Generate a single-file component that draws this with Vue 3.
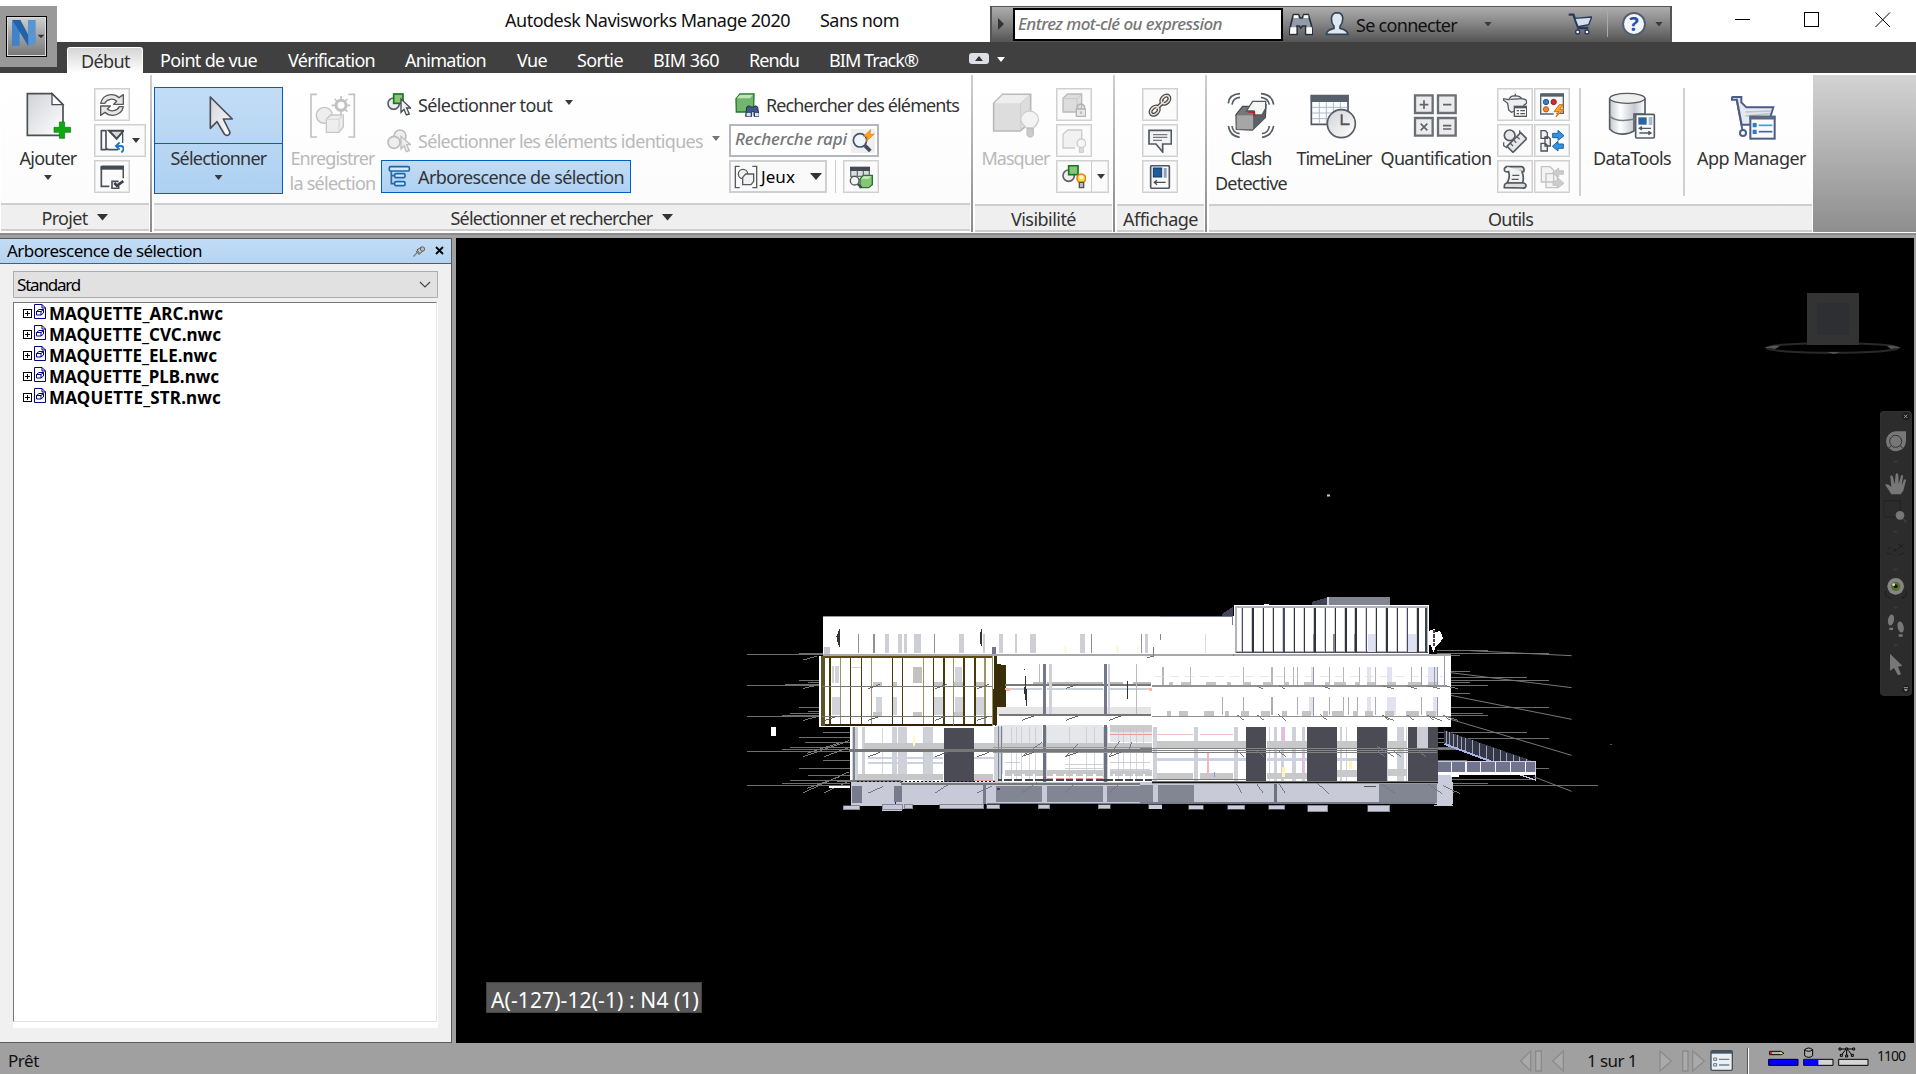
<script setup>
import { h } from 'vue'

// Tightens or loosens the tracking so that a label fills its slot width.
const vFit = {
  mounted(el, { value }) {
    const range = document.createRange()
    range.selectNodeContents(el)
    const natural = range.getBoundingClientRect().width
    const count = el.textContent.length
    el.style.letterSpacing = `${(value - natural) / count}px`
  },
}

const S = 'fill="none" stroke-linejoin="round"'
const glyphs = {
  add: `<path d="M10 5H84L117 38V130H10Z" fill="url(#paper)" stroke="#4a4e55" stroke-width="5"/><path d="M84 5V38H117Z" fill="#fff" stroke="#4a4e55" stroke-width="4"/><path d="M106 90h16v16h18v15h-18v18h-16v-18H90v-15h16z" fill="#0fa80f" stroke="#0a7a0a" stroke-width="2"/>`,
  arrow: `<path d="M46 18V112L66 92L88 129Q94 136 102 131Q107 126 103 120L85 84H112Z" fill="url(#paper)" stroke="#4a4e58" stroke-width="5" stroke-linejoin="round"/>`,
  save: `<g fill="none" stroke="#c2c2c2" stroke-width="5"><path d="M24 7H6V135H24M118 7H136V135H118"/><circle cx="96" cy="40" r="15" stroke-width="9"/><path d="M96 12V25M96 55V68M68 40H81M111 40H124M77 21L86 30M115 21L106 30M115 59L106 50"/></g><circle cx="46" cy="70" r="24" fill="#eee" stroke="#c2c2c2" stroke-width="4"/><path d="M52 82L65 69H103V104L90 121H52Z" fill="#eee" stroke="#c6c6c6" stroke-width="4"/><path d="M52 82H90V121M90 82L103 69" fill="none" stroke="#dadada" stroke-width="4"/>`,
  refresh: `<g fill="#e6e6e6" stroke="#5a5a5a" stroke-width="4" stroke-linejoin="round"><path d="M2 31Q7 7 33 5Q47 4 57 14L70 5V34H41L50 25Q42 17 31 19Q19 21 14 31Z"/><path d="M70 41Q65 65 39 67Q25 68 15 58L2 67V39H31L22 48Q30 55 41 53Q53 51 58 41Z"/></g>`,
  reset: `<path d="M4 5H18V62H4ZM18 58Q22 62 28 62H54" ${S} stroke="#4d5159" stroke-width="5"/><path d="M27 5H71L50 29Z" fill="#d8d8d8" stroke="#454950" stroke-width="6"/><path d="M68 13V42" stroke="#4d5159" stroke-width="4"/><path d="M49 51H62Q71 51 71 60Q70 66 64 70M59 40L48 51L59 62" fill="none" stroke="#1d78cc" stroke-width="6"/>`,
  options: `<path d="M4 4H70V40M4 4V64H28" fill="none" stroke="#4d5159" stroke-width="5"/><rect x="2" y="3" width="70" height="11" fill="#454950"/><path d="M56 49H36V70H56V63" fill="none" stroke="#4d5159" stroke-width="5"/><path d="M43 54L51 62L70 48" fill="none" stroke="#3d4148" stroke-width="8"/>`,
  selAll: `<circle cx="20" cy="32" r="17" fill="#eee" stroke="#596068" stroke-width="5"/><rect x="20" y="3" width="28" height="28" fill="#8bc47a" stroke="#17771b" stroke-width="5"/><path d="M42 18V58L51 49L58 66L67 63L59 45H71Z" fill="#f4f4f4" stroke="#444b55" stroke-width="4"/>`,
  selSame: `<g fill="#eee" stroke="#bebebe" stroke-width="5"><circle cx="39" cy="21" r="18"/><circle cx="21" cy="40" r="18"/><path d="M42 22V60L51 51L58 68L67 65L59 47H71Z" stroke-width="4"/></g>`,
  tree: `<path d="M13 18V56H22M13 32H22" fill="none" stroke="#33679c" stroke-width="5"/><g fill="#d5e9fa" stroke="#1b69ad" stroke-width="5"><rect x="7" y="5" width="60" height="13" rx="4"/><rect x="23" y="26" width="31" height="12" rx="4"/><rect x="23" y="50" width="31" height="12" rx="4"/></g>`,
  findItems: `<path d="M3 17L15 3H57L56 42L45 57H4Z" fill="#71b66c" stroke="#24782a" stroke-width="4"/><path d="M5 16L15 5H54L45 16Z" fill="#c0e6b6"/><path d="M35 42Q41 35 48 42H55Q63 35 68 42L72 70H57V56H50V70H32Z" fill="#3c5a83" stroke="#203456" stroke-width="3"/><path d="M35 60h12v10h-12zM60 60h11v10h-11z" fill="#dce4ef"/>`,
  quick: `<rect width="72" height="72" fill="#efefef"/><circle cx="27" cy="34" r="20" fill="#eef6fa" stroke="#46536a" stroke-width="5"/><path d="M42 50L58 66" stroke="#444b55" stroke-width="11"/><path d="M59 2L38 22L50 23L45 38L70 15L57 16Z" fill="#ffa21f" stroke="#ef7b06" stroke-width="2"/>`,
  sets: `<path d="M17 4H4V68H17M55 4H68V68H55" fill="none" stroke="#555b63" stroke-width="4"/><circle cx="27" cy="27" r="14" fill="#f2f2f2" stroke="#555b63" stroke-width="4"/><path d="M26 37L35 27H59V49L51 59H26Z" fill="#f2f2f2" stroke="#555b63" stroke-width="4"/>`,
  compare: `<rect x="3" y="5" width="60" height="13" fill="#454b54"/><path d="M5 18V34H61V18M25 18V33M43 18V33" fill="#ddd" stroke="#6d737b" stroke-width="4"/><path d="M33 42L43 31H70V59L59 68H33Z" fill="#85c678" stroke="#24782a" stroke-width="4"/><path d="M36 41L44 34H67L59 42Z" fill="#c6e8bd"/><circle cx="17" cy="47" r="13" fill="#edf5f5" stroke="#555" stroke-width="4"/><path d="M26 57L38 68" stroke="#444b55" stroke-width="7"/>`,
  hide: `<path d="M5 34L32 7H116V90L85 117H5Z" fill="#ddd" stroke="#b9b9b9" stroke-width="5"/><path d="M7 34L32 9H114L86 34Z" fill="#eee"/><path d="M86 34V116M86 34L115 8" stroke="#ccc" stroke-width="3"/><path d="M86 84A24 24 0 1 1 140 84Q136 98 124 108H104Q90 97 86 84Z" fill="#f3f3f3" stroke="#cecece" stroke-width="4"/><path d="M105 109H124V129L119 135H110L105 129Z" fill="#ccc" stroke="#bababa" stroke-width="3"/>`,
  lockCube: `<path d="M3 16L17 3H59V44L45 57H3Z" fill="#ddd" stroke="#b9b9b9" stroke-width="4"/><path d="M3 17H45V56M45 17L59 4" fill="none" stroke="#c9c9c9" stroke-width="3"/><path d="M46 47V38Q57 28 67 39V48" fill="none" stroke="#b3b3b3" stroke-width="5"/><path d="M43 48H71V70H43Z" fill="#e6e6e6" stroke="#b3b3b3" stroke-width="4"/><path d="M57 55V63" stroke="#999" stroke-width="3"/>`,
  showCube: `<path d="M39 57H3V16L17 3H59V31" fill="#f1f1f1" stroke="#ccc" stroke-width="4"/><circle cx="58" cy="43" r="13" fill="#f7f7f7" stroke="#ccc" stroke-width="4"/><path d="M52 56H64V70H52Z" fill="#ddd" stroke="#c8c8c8" stroke-width="3"/>`,
  showAll: `<circle cx="20" cy="32" r="17" fill="#eee" stroke="#5b626c" stroke-width="5"/><rect x="20" y="2" width="28" height="27" fill="#86c67d" stroke="#17771b" stroke-width="5"/><circle cx="58" cy="40" r="13" fill="#ffda43" stroke="#ee7f09" stroke-width="5"/><circle cx="58" cy="37" r="6" fill="#fff9ce"/><path d="M52 52H65V68H52Z" fill="#bbb" stroke="#555" stroke-width="4"/>`,
  link: `<g fill="none" stroke="#45444a" stroke-width="12"><ellipse cx="20" cy="53" rx="10" ry="14" transform="rotate(45 20 53)"/><ellipse cx="52" cy="20" rx="10" ry="14" transform="rotate(45 52 20)"/><path d="M24 48L49 24"/></g><g fill="none" stroke="#e9dfcf" stroke-width="5"><ellipse cx="20" cy="53" rx="10" ry="14" transform="rotate(45 20 53)"/><ellipse cx="52" cy="20" rx="10" ry="14" transform="rotate(45 52 20)"/><path d="M24 48L49 24"/></g>`,
  comment: `<path d="M3 4H70V45H44V69L24 45H3Z" fill="#f3f3f3" stroke="#515761" stroke-width="5"/><path d="M15 17H58M15 25H58M15 34H42" stroke="#747a84" stroke-width="4"/>`,
  props: `<rect x="8" y="2" width="56" height="68" rx="4" fill="#fafafa" stroke="#505761" stroke-width="5"/><rect x="16" y="9" width="25" height="27" fill="#205a99" stroke="#123968" stroke-width="3"/><path d="M47 9H56V38H47Z" fill="#8aa2bc"/><path d="M19 52H53M27 46L19 52L27 59" fill="none" stroke="#454d58" stroke-width="4"/>`,
  clash: `<g fill="none" stroke="#555d67" stroke-width="5"><path d="M4 34Q6 7 39 5M15 38Q18 17 39 16"/><path d="M102 5Q135 7 140 38M102 16Q124 19 127 38"/><path d="M4 102Q9 132 38 136M15 102Q17 122 38 125"/><path d="M140 102Q134 132 105 136M127 102Q125 122 105 125"/></g><path d="M27 68L47 43H69L117 38L115 76L76 114L28 112Z" fill="#777" stroke="#464c54" stroke-width="4"/><path d="M29 70H78V112H29Z" fill="#a6a6a6"/><path d="M79 71L114 49V78L79 112Z" fill="#5c6066"/><path d="M58 57L77 28H116V49L105 69H81V57Z" fill="#f5f5f5" stroke="#535963" stroke-width="4"/><path d="M62 60H82V74" fill="none" stroke="#c6171c" stroke-width="5"/>`,
  timeline: `<path d="M4 11H114V97H4Z" fill="#fafcff" stroke="#505862" stroke-width="5"/><rect x="2" y="9" width="114" height="21" fill="#57606b"/><path d="M6 46H112M6 63H112M6 80H112M28 31V95M49 31V95M70 31V95M91 31V95" stroke="#adb8c5" stroke-width="3"/><circle cx="94" cy="95" r="42" fill="url(#paper)" stroke="#555d67" stroke-width="5"/><path d="M95 67V97H119" fill="none" stroke="#555" stroke-width="6"/>`,
  quant: `<g fill="#ececec" stroke="#6b6f76" stroke-width="7"><path d="M9 10H62V63H9ZM78 10H131V63H78ZM9 78H62V131H9ZM78 78H131V131H78Z"/></g><path d="M23 38H49M36 25V51M93 38H118M26 95L46 115M46 95L26 115M93 101H118M93 111H118" stroke="#5e636b" stroke-width="5"/>`,
  teapot: `<path d="M20 16Q24 7 37 9Q49 7 57 17L68 20Q76 30 63 36L62 45L25 58L17 51L14 31L1 21L2 17L18 20Z" fill="#eee" stroke="#525963" stroke-width="4"/><path d="M22 19L57 17M37 2V9" stroke="#525963" stroke-width="4"/><rect x="34" y="40" width="37" height="30" fill="#fafafa" stroke="#505862" stroke-width="4"/><path d="M34 43H71" stroke="#505862" stroke-width="6"/><path d="M41 53H48M52 53H66M41 62H48M52 62H66" stroke="#555" stroke-width="4"/>`,
  script: `<path d="M2 3H70V61H49M2 3V63H41" fill="#f6f6f6" stroke="#59616b" stroke-width="4"/><rect y="2" width="72" height="9" fill="#57616d"/><circle cx="18" cy="27" r="8" fill="#337fca" stroke="#215c9c" stroke-width="3"/><circle cx="41" cy="27" r="8" fill="#c5302c" stroke="#932827" stroke-width="3"/><circle cx="18" cy="49" r="8" fill="#f0862d" stroke="#bd5e15" stroke-width="3"/><path d="M58 35L42 56H57L48 71L72 50H59L69 35Z" fill="#ffa625" stroke="#d57014" stroke-width="3"/>`,
  sensor: `<circle cx="20" cy="19" r="16" fill="#e8e8e8" stroke="#555c65" stroke-width="5"/><path d="M53 11L71 29L30 70L12 52Z" fill="#e9e9e9" stroke="#555c65" stroke-width="5"/><path d="M2 40V50L12 57M50 4V12M22 43L30 51M32 33L40 41M42 23L50 31" fill="none" stroke="#59616b" stroke-width="4"/>`,
  copyDb: `<g fill="#f2f2f2" stroke="#4c535d" stroke-width="4"><path d="M3 5H16L22 11V28H3ZM15 24H25L31 30V51H15ZM3 43H16L22 49V66H3Z"/></g><path d="M38 13H54V4L72 20L54 34V26H38ZM70 45H54V37L37 52L54 66V58H70Z" fill="#3692e1" stroke="#1763a6" stroke-width="3"/>`,
  scroll: `<path d="M12 5H56Q66 8 62 20H20Z" fill="#ddd" stroke="#505862" stroke-width="5"/><path d="M12 5Q1 8 5 18Q9 22 17 20Q22 38 12 54H59Q64 34 56 19" fill="#f2f2f2" stroke="#505862" stroke-width="5"/><path d="M4 68Q3 54 13 54H62Q72 58 68 66Q65 71 57 69Z" fill="#ddd" stroke="#505862" stroke-width="5"/><path d="M28 31H49M26 43H47" stroke="#505862" stroke-width="4"/>`,
  transfer: `<g fill="#f3f3f3" stroke="#c4c4c4" stroke-width="4"><path d="M4 5H30L41 16V51H4ZM18 26H43L52 35V68H18Z"/><path d="M70 17H56V9L38 23L56 36V28H70ZM39 48H55V40L72 55L55 68V61H39Z" fill="#ccc" stroke-width="3"/></g>`,
  data: `<path d="M5 18V111Q27 134 65 123L78 117V66H111V18" fill="url(#metal)" stroke="#555c65" stroke-width="5"/><ellipse cx="58" cy="19" rx="53" ry="15" fill="#eee" stroke="#555c65" stroke-width="4"/><path d="M5 72Q26 93 80 81" fill="none" stroke="#777e86" stroke-width="5"/><rect x="83" y="67" width="56" height="71" rx="3" fill="#fafafa" stroke="#555c65" stroke-width="5"/><rect x="91" y="76" width="25" height="22" fill="#2c659e"/><path d="M122 75H133V99H122Z" fill="#a8bbd0"/><path d="M94 109H129M102 104L94 109L102 114M94 123H129M121 118L129 123L121 128" fill="none" stroke="#505862" stroke-width="4"/>`,
  market: `<path d="M6 15V23H20L37 113" fill="none" stroke="#4b5c88" stroke-width="6"/><path d="M5 15H34V31L49 46H130L119 81L56 98H35L20 20" fill="#e6e9ed" stroke="#4b5c88" stroke-width="6"/><path d="M46 72L120 65M47 60L124 57" stroke="#bec4ce" stroke-width="5"/><circle cx="39" cy="123" r="9" fill="#fff" stroke="#4b5c88" stroke-width="6"/><rect x="61" y="74" width="73" height="66" fill="#fafafa" stroke="#4b5c88" stroke-width="6"/><path d="M58 77H136" stroke="#5b687e" stroke-width="11"/><path d="M68 93H80V106H68ZM68 113H80V126H68Z" fill="#2a7ec7"/><path d="M86 100H127" stroke="#399fe5" stroke-width="5"/><path d="M86 119H127" stroke="#4863a4" stroke-width="5"/>`,
  binoculars: `<path d="M5 39L13 8H29L33 18H40L44 8H58L67 39L72 67H50V42H40L35 48L31 42H24V67H1Z" fill="#929ba7" stroke="#29313f" stroke-width="5"/><path d="M4 46H22V65H3ZM52 46H69V65H52ZM14 10H28V18H14ZM44 10H58V18H44Z" fill="#fafafa"/>`,
  person: `<path d="M4 67Q5 54 27 49V43Q17 31 20 14Q24 2 37 2Q50 3 53 15Q55 31 45 43V49Q65 53 70 67Z" fill="#dfe7ef" stroke="#33455c" stroke-width="5"/>`,
  cart: `<path d="M2 8H16L22 24L31 48H61" fill="none" stroke="#27395f" stroke-width="7"/><path d="M20 19L71 15L62 38L30 44Z" fill="#d9dfe8" stroke="#25385f" stroke-width="4"/><circle cx="29" cy="60" r="6" fill="#fff" stroke="#29385b" stroke-width="4"/><circle cx="57" cy="60" r="6" fill="#fff" stroke="#29385b" stroke-width="4"/>`,
  pin: `<path d="M3 69L24 46" stroke="#777" stroke-width="7"/><path d="M18 35L38 59M24 29L52 12L65 31L41 52Z" fill="#c9c9c9" stroke="#555" stroke-width="6"/><circle cx="57" cy="24" r="13" fill="#bbb" stroke="#555" stroke-width="5"/>`,
  list: `<rect x="3" y="5" width="64" height="59" rx="4" fill="#edf0f2" stroke="#444f5c" stroke-width="4"/><path d="M3 10H67" stroke="#465467" stroke-width="8"/><path d="M11 27H20V34H11ZM11 44H20V51H11Z" fill="none" stroke="#667383" stroke-width="3"/><path d="M27 31H58M27 48H58" stroke="#71808f" stroke-width="4"/>`,
}
const Icon = ({ name, size = 24 }) =>
  h('svg', { width: size, height: size, viewBox: size > 40 ? '0 0 144 144' : '0 0 72 72', innerHTML: glyphs[name] })
Icon.props = ['name', 'size']

const tabs = [
  ['Point de vue', 97, 31], ['Vérification', 87, 30], ['Animation', 81, 31], ['Vue', 30, 30],
  ['Sortie', 46, 30], ['BIM 360', 66, 30], ['Rendu', 50, 30], ['BIM Track®', 89, 0],
]
const files = [['ARC', 174], ['CVC', 172], ['ELE', 168], ['PLB', 170], ['STR', 172]]
const tools = ['teapot', 'script', 'sensor', 'copyDb', 'scroll', 'transfer']

// Elevation geometry, three units per screen pixel.
const goldMullions = [270, 301, 332, 364, 394, 457, 487, 550, 580, 612, 641, 672, 705, 735]
const darkMullions = [307, 339, 371, 401, 432, 463, 493, 525, 556, 587, 618, 648, 680, 710, 741, 772, 803, 834]
const roofPosts = [[354, 3], [400, 4], [436, 10], [475, 10], [492, 8], [523, 20], [582, 3], [657, 14], [730, 6], [778, 12], [826, 6], [870, 19], [1021, 13], [1053, 3], [1202, 3], [1216, 7]]
const leftRays = [
  [22, 225, 250], [150, 223, 250], [178, 220, 250], [22, 317, 240], [134, 315, 240], [178, 301, 240], [205, 307, 240],
  [22, 410, 240], [125, 407, 240], [150, 402, 240], [178, 383, 240], [205, 394, 240], [250, 457, 330], [178, 474, 330],
  [195, 489, 330], [150, 502, 330], [125, 508, 330], [22, 514, 330], [250, 542, 330], [178, 566, 330], [205, 586, 330], [150, 602, 330], [125, 610, 330], [22, 617, 330],
]
const leftDiagonals = [[190, 240, 232, 228], [190, 325, 240, 314], [190, 421, 240, 408], [190, 530, 328, 482], [253, 530, 328, 502], [200, 520, 300, 488], [190, 638, 328, 575], [253, 638, 328, 603], [200, 626, 300, 590]]
const slabTicks = [[385, 530], [585, 530], [712, 530], [845, 530], [977, 530], [1107, 530], [385, 638], [585, 638], [712, 638], [845, 638], [977, 638], [1107, 638], [256, 421], [385, 421], [585, 421], [712, 421], [845, 421], [977, 421], [1107, 421], [385, 326], [585, 326], [712, 326], [977, 326]]
const rightRays = [
  [890, 212, 1045], [890, 221, 1228], [932, 226, 960], [932, 276, 990], [932, 294, 1160], [932, 301, 1228], [932, 307, 990], [932, 316, 1045],
  [932, 341, 990], [932, 384, 1228], [932, 402, 1028], [932, 407, 1045], [895, 457, 1160], [895, 475, 1228], [895, 489, 990], [895, 502, 1020], [895, 510, 1045], [895, 542, 980], [1180, 566, 1228], [895, 600, 1180], [895, 611, 1045], [895, 617, 1375],
]
const rightDiagonals = [[990, 212, 1295, 227], [932, 278, 1295, 323], [932, 346, 1295, 418], [932, 418, 1295, 526], [1180, 590, 1295, 634]]
const rightTicks = [[290, 421], [350, 421], [415, 421], [540, 421], [725, 421], [800, 421], [860, 421], [908, 421], [290, 530], [350, 530], [415, 530], [712, 530], [760, 530], [835, 530], [290, 638], [350, 638], [415, 638], [530, 638], [725, 638], [865, 638], [920, 638]]
const floorWindows = [[65, 6], [150, 2], [309, 3], [393, 5], [432, 3], [459, 4], [471, 3], [512, 9], [568, 3], [609, 3], [658, 3], [682, 10], [705, 3], [742, 13], [813, 3], [844, 3], [865, 28]]
const lowWindows = [[246, 3], [309, 3], [393, 5], [471, 3], [508, 13], [568, 3], [609, 3], [625, 3], [651, 3], [682, 10], [705, 3], [742, 26], [843, 3], [880, 14]]
const ledges = [[88, 12], [123, 27], [198, 30], [261, 12], [309, 25], [370, 26], [432, 15], [493, 27], [555, 15], [582, 35], [645, 14], [680, 26], [740, 27], [803, 12], [815, 28], [864, 30]]
const columns = [[335, 18], [366, 10], [456, 14], [475, 17], [492, 10], [550, 30], [762, 28], [908, 13], [1090, 15], [1243, 9]]
const groundColumns = [[38, 12], [162, 12], [281, 13], [386, 4], [403, 9], [423, 9], [457, 11], [485, 9], [600, 7], [617, 4], [742, 3], [772, 20], [797, 4]]
const chairs = [790, 820, 851, 882, 944, 975, 1004, 1034, 1064, 1122, 1152, 1183, 1213]
const footings = [[310, 677, 50], [427, 675, 60], [493, 674, 26], [600, 674, 132], [741, 674, 39], [895, 674, 34], [1075, 674, 36], [1226, 674, 38]]
const rightFootings = [[147, 43], [264, 50], [387, 48], [504, 59], [684, 66]]
</script>

<template>
  <div class="app">
    <svg width="0" height="0" class="defs">
      <linearGradient id="paper" x1="0" y1="0" x2="1" y2="1"><stop stop-color="#d0d2d7" /><stop offset="1" stop-color="#fff" /></linearGradient>
      <linearGradient id="metal"><stop stop-color="#c4c7cc" /><stop offset=".3" stop-color="#fff" /><stop offset=".7" stop-color="#c5c9cf" /><stop offset="1" stop-color="#fff" /></linearGradient>
    </svg>

    <header class="titlebar">
      <div class="doc"><span v-fit="285">Autodesk Navisworks Manage 2020</span><span v-fit="79">Sans nom</span></div>
      <div class="info">
        <i class="play" />
        <div class="keyword"><span v-fit="204">Entrez mot-clé ou expression</span></div>
        <Icon name="binoculars" class="i-bino" /><Icon name="person" class="i-person" />
        <span v-fit="101" class="login">Se connecter</span><i class="caret c-login" />
        <Icon name="cart" class="i-cart" /><i class="bar" />
        <span class="help">?</span><i class="caret c-help" />
      </div>
      <svg class="winbtns" width="156" height="16" viewBox="0 0 156 16" fill="none" stroke="#000" shape-rendering="crispEdges">
        <path d="M0 7.5H15M69.5.5H83.5V14.5H69.5Z" /><path d="M140.5.5L155 15M155 .5L140.5 15" shape-rendering="auto" />
      </svg>
    </header>

    <nav class="tabs">
      <div class="tab-active"><span v-fit="49">Début</span></div>
      <span v-for="t in tabs" :key="t[0]" class="tab" :style="{ width: t[1] + 'px', marginRight: t[2] + 'px' }"><span v-fit="t[1]">{{ t[0] }}</span></span>
      <i class="toggle" /><i class="caret white" />
    </nav>
    <div class="appmenu">
      <div class="appbox">
        <svg width="40" height="40" viewBox="0 0 120 120">
          <path d="M16 13L16 86L36 80V42Z" fill="#2d67a8" /><path d="M16 9H40L64 55V9H85V79L63 86L38 45V86H16Z" fill="#3f83ca" /><path d="M16 9H40L64 55V86L38 45Z" fill="#2461a8" /><path d="M64 9H85V79L64 86Z" fill="#5795d3" /><path d="M92 53H112L102 64Z" fill="#333" />
        </svg>
      </div>
    </div>

    <section class="ribbon">
      <div class="group projet">
        <div class="body">
          <div class="big"><Icon name="add" :size="48" /><span v-fit="57">Ajouter</span><i class="caret" /></div>
          <div class="stack">
            <div class="btn"><Icon name="refresh" /></div>
            <div class="btn wide"><Icon name="reset" /><i class="caret" /></div>
            <div class="btn"><Icon name="options" /></div>
          </div>
        </div>
        <footer><span v-fit="46">Projet</span><i class="more" /></footer>
      </div>
      <i class="sep" />
      <div class="group selection">
        <div class="body">
          <div class="select"><div class="half"><Icon name="arrow" :size="48" /></div><span v-fit="96">Sélectionner</span><i class="caret" /></div>
          <div class="big save disabled"><Icon name="save" :size="48" /><span v-fit="84">Enregistrer</span><span v-fit="86">la sélection</span></div>
          <div class="stack rows">
            <div class="row first"><Icon name="selAll" /><span v-fit="134">Sélectionner tout</span><i class="caret" /></div>
            <div class="row same disabled"><Icon name="selSame" /><span v-fit="285">Sélectionner les éléments identiques</span><i class="caret" /></div>
            <div class="row on"><Icon name="tree" /><span v-fit="206">Arborescence de sélection</span></div>
          </div>
          <div class="stack find">
            <div class="row"><Icon name="findItems" /><span v-fit="193">Rechercher des éléments</span></div>
            <div class="quick"><span v-fit="112">Recherche rapi</span><Icon name="quick" /></div>
            <div class="line">
              <div class="sets"><Icon name="sets" /><span v-fit="34">Jeux</span><i class="more" /></div>
              <i class="bar" />
              <div class="btn"><Icon name="compare" /></div>
            </div>
          </div>
        </div>
        <footer><span v-fit="202">Sélectionner et rechercher</span><i class="more" /></footer>
      </div>
      <i class="sep" />
      <div class="group visibility low">
        <div class="body">
          <div class="big disabled"><Icon name="hide" :size="48" /><span v-fit="68">Masquer</span></div>
          <div class="stack">
            <div class="btn"><Icon name="lockCube" /></div>
            <div class="btn"><Icon name="showCube" /></div>
            <div class="btn split"><Icon name="showAll" /><b><i class="caret" /></b></div>
          </div>
        </div>
        <footer><span v-fit="65">Visibilité</span></footer>
      </div>
      <i class="sep" />
      <div class="group display low">
        <div class="body"><div class="stack"><div v-for="n in ['link', 'comment', 'props']" :key="n" class="btn"><Icon :name="n" /></div></div></div>
        <footer><span v-fit="75">Affichage</span></footer>
      </div>
      <i class="sep" />
      <div class="group tools low">
        <div class="body">
          <div class="big clash"><Icon name="clash" :size="48" /><span v-fit="41">Clash</span><span v-fit="72">Detective</span></div>
          <div class="big time"><Icon name="timeline" :size="48" /><span v-fit="75">TimeLiner</span></div>
          <div class="big quant"><Icon name="quant" :size="48" /><span v-fit="111">Quantification</span></div>
          <div class="toolgrid"><div v-for="n in tools" :key="n" class="btn"><Icon :name="n" /></div></div>
          <i class="vbar" />
          <div class="big data"><Icon name="data" :size="48" /><span v-fit="78">DataTools</span></div>
          <i class="vbar last" />
          <div class="big market"><Icon name="market" :size="48" /><span v-fit="109">App Manager</span></div>
        </div>
        <footer><span v-fit="45">Outils</span></footer>
      </div>
      <div class="empty" />
    </section>

    <main class="work">
      <aside class="panel">
        <h2><span v-fit="195">Arborescence de sélection</span><Icon name="pin" :size="12" class="pin" /><svg width="9" height="9" viewBox="0 0 9 9"><path d="M1 1L8 8M8 1L1 8" stroke="#000" stroke-width="1.8" /></svg></h2>
        <div class="combo"><span v-fit="63">Standard</span><svg width="12" height="7" viewBox="0 0 12 7"><path d="M1 1L6 6L11 1" fill="none" stroke="#444" stroke-width="1.2" /></svg></div>
        <div class="treewrap">
          <ul>
            <li v-for="f in files" :key="f[0]">
              <svg class="plus" width="9" height="9" viewBox="0 0 9 9" shape-rendering="crispEdges"><path d="M.5.5H8.5V8.5H.5ZM2 4.5H7M4.5 2V7" fill="none" stroke="#000" /></svg>
              <svg class="file" width="12" height="15" viewBox="0 0 12 15"><path d="M.5.5H8L11.5 4V14.5H.5Z" fill="#fff" stroke="#000080" /><path d="M8 .5V4H11.5M2.5 7.5H7V11H2.5ZM2.5 7.5L5 5.5H9.5V9L7 11M7 7.5L9.5 5.5" fill="none" stroke="#000080" /></svg>
              <span v-fit="f[1]">MAQUETTE_{{ f[0] }}.nwc</span>
            </li>
          </ul>
        </div>
      </aside>

      <div class="view">
        <svg class="scene" width="1458" height="805" viewBox="456 238 1458 805">
          <g shape-rendering="crispEdges">
            <g transform="translate(740 580) scale(.33333)">
              <path v-for="(r, i) in leftRays" :key="'r' + i" :d="`M${r[0]} ${r[1]}H${r[2]}`" stroke="#6e6e6e" stroke-width="3" />
              <path v-for="(r, i) in leftDiagonals" :key="'d' + i" :d="`M${r[0]} ${r[1]}L${r[2]} ${r[3]}`" stroke="#777" stroke-width="3" />
              <rect x="93" y="442" width="16" height="25" fill="#fff" />
              <rect x="248" y="109" width="1015" height="120" fill="#fff" /><path d="M248 109.500H1263" stroke="#999" stroke-width="3" />
              <path d="M289 170L300 143V203L294 191ZM719 165L725 144V200L720 190Z" fill="#333" />
              <rect v-for="(p, i) in roofPosts" :key="'p' + i" :x="p[0]" y="163" :width="p[1]" height="55" :fill="p[1] > 5 ? '#cdced6' : '#8e909c'" />
              <rect x="253" y="202" width="18" height="21" fill="#c5c8d2" /><rect x="756" y="201" width="12" height="27" fill="#727789" />
              <path d="M971 198h9v20h-9zM1128 198h8v20h-8zM1190 198h6v20h-6z" fill="#fdf9df" />
              <rect x="238" y="228" width="1025" height="214" fill="#fff" /><path d="M250 225H1263" stroke="#a8a8a8" stroke-width="6" />
              <path d="M275 259h6v50h-6zM285 259h12v50h-12zM335 262h28v2h-28zM646 262h20v45h-20zM275 352h26v54h-26zM409 352h16v54h-16zM460 352h11v54h-11zM583 352h27v54h-27zM645 352h24v54h-24zM705 352h30v54h-30z" fill="#d2d4dc" />
              <rect x="520" y="260" width="25" height="48" fill="#c2c2c3" />
              <path d="M400 312H427M455 312H470M583 312H610M643 312H670M708 312H735M400 401H427M518 401H546M643 401H670" stroke="#c6c6c6" stroke-width="12" />
              <path v-for="(x, i) in goldMullions" :key="'g' + x" :d="`M${x} 234V436`" :stroke="i % 3 === 1 ? '#9b946b' : '#493c0b'" stroke-width="3.600" />
              <path d="M248 229V438M249 231H756" stroke="#5b4b10" stroke-width="5" fill="none" /><path d="M244 436H755" stroke="#302305" stroke-width="7" /><path d="M249 229V438" stroke="#5d532b" stroke-width="10" /><path d="M238 228V441H757V230" stroke="#fff" stroke-width="3" fill="none" />
              <path d="M762 227H771V252L797 255V380L771 381V440L759 434Z" fill="#392d0a" /><path d="M758 228V438M641 234V436" stroke="#9b946b" stroke-width="4" />
              <path d="M245 319H756M245 409H756" stroke="#777" stroke-width="4" />
              <rect x="771" y="381" width="462" height="24" fill="#e5e5e5" />
              <path d="M795 315H1233M776 405H1233" stroke="#777" stroke-width="7" /><path d="M795 327H905M920 327H1088M1110 327H1233" stroke="#cbd0d8" stroke-width="5" />
              <path d="M880 308H910M920 308H1090M1105 308H1150M1180 308H1233" stroke="#b9b9b9" stroke-width="6" />
              <path d="M914 253V403M1097 253V403" stroke="#73798b" stroke-width="11" /><path d="M931 253V403M1107 253V403" stroke="#d0d1d7" stroke-width="8" />
              <path d="M853 263L857 291L861 345L860 382L855 348L851 332L856 310ZM1161 290L1164 314V370L1161 345Z" fill="#333" /><path d="M1189 253V402M900 253V308" stroke="#bbb" stroke-width="3" />
              <path d="M797 328H809M1228 328H1235" stroke="#ffb4a1" stroke-width="9" />
              <rect x="330" y="441" width="933" height="166" fill="#fff" />
              <path d="M768 436H905V490H790ZM918 436H1090V495H918ZM1110 436H1237V487H1110Z" fill="#e6e7ea" /><path d="M1110 436H1237V457H1110Z" fill="#ccc" />
              <rect v-for="(c, i) in columns" :key="'c' + i" :x="c[0]" y="441" :width="c[1]" height="165" fill="#cfd1d9" />
              <path d="M372 500H1237M350 592H610M702 592H760M795 579H908M920 579H1088M1110 579H1237" stroke="#c6c7c9" stroke-width="19" />
              <path d="M384 533H610M702 533H762M384 548H610" stroke="#cdd2df" stroke-width="6" /><path d="M795 548H840M923 518H1090M975 554H1090M975 566H1090M1110 548H1230M1110 570H1230" stroke="#ccd0d7" stroke-width="4" />
              <path d="M1110 463H1236M920 597H1088M702 603H765" stroke="#f09a97" stroke-width="3" /><path d="M518 468h6v30h-6z" fill="#fff8cb" />
              <path d="M427 443V602M550 443V602M815 440V600M830 440V600M845 440V600M870 440V600M888 440V600M990 440V600M1040 440V600M1065 440V600M1135 440V600M1152 440V600M1172 440V600M1190 440V600M1212 440V600" stroke="#c2c5cd" stroke-width="2" />
              <path d="M776 437V600M785 437V600M343 441V602" stroke="#7b8497" stroke-width="5" /><path d="M914 436V605M1097 436V605" stroke="#6c7284" stroke-width="11" />
              <rect x="611" y="443" width="91" height="162" fill="#4b4b55" />
              <path d="M328 511H1263" stroke="#777" stroke-width="9" /><path d="M760 502H1263M760 517H1263" stroke="#999" stroke-width="3" />
              <path v-for="(t, i) in slabTicks" :key="'t' + i" :d="`M${t[0]} ${t[1]}L${t[0] + 36} ${t[1] - 13}`" stroke="#666" stroke-width="3" />
              <path d="M845 530L905 488M977 530L1013 492M1107 530L1140 482M1165 510L1177 485" stroke="#777" stroke-width="3" />
              <path d="M775 600H1237" stroke="#444" stroke-width="8" /><path v-for="x in chairs" :key="x" :d="`M${x} 582V604`" stroke="#fff" stroke-width="7" />
              <path d="M333 607H1263V673H733V686H600V674H520V687H487V692H427V677H333Z" fill="#c9cad8" />
              <path d="M335 618H366V669H335ZM461 618H487V667H461ZM729 615H737V673H729Z" fill="#777b8b" /><path d="M769 617H907V667H769ZM920 617H1090V667H920ZM1101 617H1239V667H1101ZM1254 617H1263V667H1254Z" fill="#828592" />
              <path d="M740 670H1263" stroke="#777b8a" stroke-width="4" />
              <rect v-for="(f, i) in footings" :key="'f' + i" :x="f[0]" :y="f[1]" :width="f[2]" height="13" fill="#c8c9d6" stroke="#646775" stroke-width="2" />
              <path d="M268 621H330" stroke="#fff" stroke-width="5" /><path d="M290 604H480L486 611H1263" fill="none" stroke="#777" stroke-width="6" /><path d="M350 605H770" stroke="#111" stroke-width="3" stroke-dasharray="8 4" />
              <path d="M385 639L430 619M585 639L631 610M712 639L755 618M845 639L890 608M977 639L1002 610M1107 639L1135 614" stroke="#777" stroke-width="3" />
              <path d="M464 666h5v5h-5z" fill="#11d" /><path d="M770 624h10v6h-10z" fill="#727" />
            </g>
            <g transform="translate(1140 580) scale(.33333)">
              <path v-for="(r, i) in rightRays" :key="'r' + i" :d="`M${r[0]} ${r[1]}H${r[2]}`" stroke="#6e6e6e" stroke-width="3" />
              <path d="M246 102L280 80V111H246Z" fill="#424457" /><path d="M517 65L565 52V76H517Z" fill="#414254" /><path d="M565 51H749V76H565Z" fill="#828490" /><path d="M564 51V76" stroke="#d6d7df" stroke-width="4" />
              <path d="M63 109H281V226H63ZM282 75H866V222H282Z" fill="#fff" /><path d="M372 73H386" stroke="#fff" stroke-width="4" /><path d="M60 109H278V135" fill="none" stroke="#777b8b" stroke-width="3" />
              <path d="M287 81H862V217H287Z" fill="none" stroke="#b3b3c0" stroke-width="6" /><path d="M287 218H864" stroke="#4d4e62" stroke-width="5" /><path d="M858 83V218" stroke="#374743" stroke-width="7" />
              <path d="M805 163h24v52h-24zM683 163h25v52h-25z" fill="#dde1f1" />
              <g v-for="(x, i) in darkMullions" :key="'m' + x"><path :d="`M${x} 84V217`" :stroke="i % 4 === 0 ? '#48486d' : '#30343c'" stroke-width="4" /><path :d="`M${x - 3} 84V217`" stroke="#bbb" stroke-width="2" /></g>
              <path d="M520 163V216M582 163V216M644 163V216M62 163V180" stroke="#818694" stroke-width="4" /><path d="M197 163V218" stroke="#ddd" stroke-width="3" />
              <path d="M866 154L877 149L885 147V155L901 154L909 175L900 188L887 201L880 217L874 198L866 193Z" fill="#fff" /><path d="M882 150V200" stroke="#444" stroke-width="6" stroke-dasharray="10 3" />
              <path d="M35 227H932V441H35Z" fill="#fff" /><path d="M0 225H932" stroke="#a8a8a8" stroke-width="6" /><path d="M20 234L42 228V200M280 222V227" stroke="#777" stroke-width="3" fill="none" />
              <rect v-for="(w, i) in floorWindows" :key="'u' + i" :x="w[0]" y="260" :width="w[1]" height="56" :fill="w[1] > 8 ? '#dfe3f2' : '#b5b6bf'" />
              <rect v-for="(w, i) in lowWindows" :key="'l' + i" :x="w[0]" y="351" :width="w[1]" height="54" :fill="w[1] > 8 ? '#dfe3f2' : '#abacb6'" />
              <g v-for="(l, i) in ledges" :key="'e' + i" fill="#c4c4c4"><rect :x="l[0]" y="306" :width="l[1]" height="11" /><rect :x="l[0] - 6" y="394" :width="l[1]" height="13" /></g>
              <path d="M45 290H910" stroke="#ddd" stroke-width="2" stroke-dasharray="27 18" /><path d="M36 319H920M36 410H932" stroke="#939393" stroke-width="5" />
              <path d="M913 228V318M846 260V318M884 260V318M893 260V318M520 260V318M520 351V408M893 351V408" stroke="#9298b1" stroke-width="3" />
              <path d="M36 441H895V607H36Z" fill="#fff" />
              <rect v-for="(c, i) in groundColumns" :key="'c' + i" :x="c[0]" y="441" :width="c[1]" height="162" fill="#ced0da" />
              <path d="M50 494H318M380 494H501M592 494H650M745 494H802M380 588H501M592 580H650M745 578H802M50 588H160M180 588H278" stroke="#c7c8ca" stroke-width="20" /><path d="M50 538H318M380 538H501M592 538H650" stroke="#ccd2e1" stroke-width="8" />
              <path d="M50 464H160M180 464H280" stroke="#efc0bd" stroke-width="3" /><path d="M204 520V592" stroke="#f8b4b4" stroke-width="5" /><path d="M430 442V488M489 516V588" stroke="#e3bbe6" stroke-width="8" /><path d="M430 560V590M631 544V568" stroke="#fff5ae" stroke-width="8" /><path d="M223 576V592" stroke="#8891ee" stroke-width="4" />
              <path d="M318 441H379V603H318ZM500 441H591V605H500ZM651 441H742V605H651ZM803 441H895V605H803Z" fill="#4b4b55" /><path d="M832 441H864V507H832Z" fill="#cbccd7" />
              <path d="M0 505H1000M0 512H890M36 517H890" stroke="#828282" stroke-width="4" />
              <path v-for="(t, i) in rightTicks" :key="'t' + i" :d="`M${t[0]} ${t[1] - 18}L${t[0] + 22} ${t[1]}`" stroke="#777" stroke-width="3" />
              <path d="M545 317L570 326M725 317L762 326M800 317L830 326M860 317L900 326M418 317L434 326M350 317L368 326M920 319L955 326M725 405L762 422M860 405L905 422M908 405L955 422M712 500L762 530" stroke="#777" stroke-width="3" />
              <path d="M0 607H938V673H885V671H0Z" fill="#c9cad8" /><path d="M0 615H38V669H0ZM54 615H162V669H54ZM717 612H891V669H717Z" fill="#828592" /><path d="M408 612V672" stroke="#6e7280" stroke-width="9" /><path d="M0 669H885" stroke="#777b8a" stroke-width="5" />
              <rect v-for="(f, i) in rightFootings" :key="'f' + i" :x="f[0]" y="676" :width="f[1]" :height="i > 2 ? 19 : 12" fill="#cbccda" stroke="#676b78" stroke-width="2" /><rect x="27" y="674" width="38" height="13" fill="#cbccda" />
              <path d="M882 675H940V679H882ZM895 586H935V675H891V612H895Z" fill="#cbccdb" /><path d="M36 599H318M36 604H895" stroke="#777" stroke-width="4" /><path d="M36 607H895" stroke="#111" stroke-width="3" /><path d="M36 611H895" stroke="#999" stroke-width="5" />
              <path d="M672 620H708" stroke="#555" stroke-width="5" /><path d="M290 612L305 640M350 612L370 640M418 612L436 640M530 608L566 640M725 612L765 640M865 612L905 640M908 616L960 641" stroke="#777" stroke-width="3" />
              <path d="M913 451L1187 546L1055 545L913 493Z" fill="#333747" /><path d="M919 453V492M930 457V497M942 462V501M954 466V506M966 470V509M978 474V516M997 481V520M1020 489V531M1040 497V539M1060 504V544M1081 510V545M1100 518V545M1120 524V545M1140 532V545M1160 538V545" stroke="#9fa2b2" stroke-width="3" /><path d="M913 492L1055 545" stroke="#a6b3e9" stroke-width="6" />
              <path d="M895 545H1185V580H895Z" fill="#70748e" /><path d="M934 545V580M978 545V580M1022 545V580M1066 545V580M1111 545V580M1156 545V580" stroke="#f1f2f7" stroke-width="4" /><path d="M895 544H1187V600L1140 585" fill="none" stroke="#c6c9e3" stroke-width="4" /><path d="M895 581H1187M934 588H958" stroke="#fff" stroke-width="7" />
            </g>
          </g>
          <g transform="translate(1140 580) scale(.33333)" stroke="#777" stroke-width="3"><path v-for="(r, i) in rightDiagonals" :key="i" :d="`M${r[0]} ${r[1]}L${r[2]} ${r[3]}`" /></g>
          <path d="M1327 494.500h3v2h-3z" fill="#ccc" /><path d="M1610 744h2v1h-2z" fill="#555" />
          <ellipse cx="1832.500" cy="348" rx="66" ry="4.800" fill="none" stroke="#292929" stroke-width="2" /><path d="M1764 347.500L1774 345.500L1780 346L1775 349ZM1901 347.500L1891 345.500L1887 346L1891 349ZM1827 352H1840L1834 354Z" fill="#555" />
          <rect x="1807" y="293" width="52" height="52" fill="#333" /><rect x="1817" y="303" width="32" height="32" fill="#2d2f32" />
        </svg>

        <div class="tooltip"><span v-fit="208">A(-127)-12(-1) : N4 (1)</span></div>

        <svg class="navbar" width="32" height="285" viewBox="0 0 96 855">
          <rect x="1" y="1" width="94" height="852" rx="11" fill="#2c2c2c" stroke="#343434" stroke-width="3" />
          <circle cx="77" cy="16" r="12" fill="#1e1e1e" /><path d="M72 11L82 21M82 11L72 21" stroke="#999" stroke-width="3" />
          <path d="M46 61H78V91A30 30 0 1 1 46 61Z" fill="#777" /><circle cx="47" cy="91" r="18" fill="#777" stroke="#333" stroke-width="3" /><path d="M34 104L25 112M60 104L69 112" stroke="#333" stroke-width="3" />
          <path d="M15 221Q25 217 34 228L31 196Q35 189 39 198L44 220L47 190Q52 183 55 191L56 220L63 194Q68 188 69 196L65 224L72 206Q78 202 78 208L70 239L62 250H34Q24 232 15 221Z" fill="#777" />
          <rect x="12" y="269" width="49" height="49" fill="none" stroke="#222" stroke-width="3" /><circle cx="60" cy="313" r="13" fill="#777" /><path d="M69 322L79 334" stroke="#444" stroke-width="4" />
          <path d="M38 149H55L47 156ZM38 359H55L47 366ZM38 473H55L47 480ZM38 587H55L47 594ZM38 700H55L47 707Z" fill="#3b3b3b" />
          <path d="M54 398L70 412M70 398L54 414M45 412V422M40 418H51M22 416L34 407M20 424L36 431M72 426L58 432" stroke="#1f1f1f" stroke-width="3" />
          <circle cx="47" cy="526" r="25" fill="#858585" /><circle cx="47" cy="526" r="14" fill="#58702e" /><circle cx="47" cy="526" r="6" fill="#171b10" /><circle cx="41" cy="521" r="4" fill="#ddd" /><path d="M17 540Q10 555 31 561M78 540Q85 555 65 561" fill="none" stroke="#1f1f1f" stroke-width="4" />
          <ellipse cx="33" cy="627" rx="9" ry="17" transform="rotate(10 33 627)" fill="#777" /><ellipse cx="62" cy="648" rx="9" ry="17" transform="rotate(-14 62 648)" fill="#777" /><path d="M28 650H39V657H28ZM56 670H68V677H56Z" fill="#777" />
          <path d="M30 728V779L42 771L54 793L63 790L54 767L67 764Z" fill="#777" />
          <circle cx="77" cy="834" r="11" fill="#1e1e1e" /><path d="M71 830H84M73 836H82L78 840Z" stroke="#999" stroke-width="3" />
        </svg>
      </div>
    </main>

    <footer class="status">
      <span v-fit="31" class="ready">Prêt</span>
      <svg class="pager" width="48" height="24" viewBox="0 0 144 72" fill="#aaa" stroke="#8b8b8b" stroke-width="4"><path d="M5 36L35 6V66ZM50 6H67V66H50ZM101 36L133 6V66Z" /></svg>
      <span v-fit="50" class="count">1 sur 1</span>
      <svg class="pager p2" width="48" height="24" viewBox="0 0 144 72" fill="#aaa" stroke="#8b8b8b" stroke-width="4"><path d="M43 36L9 6V66ZM77 6H93V66H77ZM142 36L107 6V66Z" /></svg>
      <Icon name="list" class="i-list" /><i class="bar" />
      <svg class="meters" width="101" height="19" viewBox="0 0 303 57" stroke="#000" stroke-width="3">
        <path d="M5 13H38L48 19L38 23H5Z" fill="#b5b5b5" /><path d="M6 14H12V22H6Z" fill="#d22" stroke="none" /><path d="M37 15L46 19L37 22Z" fill="#ee2" stroke="none" />
        <path d="M110 8V26Q122 36 134 26V8Q122 -2 110 8Q122 18 134 8" fill="#aaa" /><path d="M214 6H258M236 8V25M231 10L220 25M241 10L252 25" fill="none" /><path d="M213 3h6v6h-6zM233 3h6v6h-6zM254 3h6v6h-6zM217 22h6v6h-6zM233 24h6v6h-6zM250 22h6v6h-6z" fill="#aaa" />
        <path d="M2 37H90V55H2Z" fill="#00f" /><path d="M107 37H195V55H107ZM212 37H300V55H212Z" fill="#d5d5d5" /><path d="M108 38H151V54H108Z" fill="#00f" stroke="none" />
      </svg>
      <span v-fit="28" class="mem">1100</span>
    </footer>
  </div>
</template>

<style>
body { margin: 0; overflow: hidden; background: #a0a0a0; }
</style>

<style scoped>
.app { position: relative; width: 1916px; height: 1074px; display: flex; flex-direction: column; overflow: hidden; background: #a0a0a0; font: 18px/25px "Noto Sans", "Open Sans", sans-serif; color: #333; }
.app * { box-sizing: border-box; }
span { white-space: nowrap; }
svg { flex: none; display: block; }
.defs { position: absolute; }
i { flex: none; display: block; }
.caret { width: 8px; height: 5px; background: #3a3a3a; clip-path: polygon(0 0, 100% 0, 50% 100%); }
.more { width: 12px; height: 7px; background: #333; clip-path: polygon(0 0, 100% 0, 50% 100%); }

.titlebar { height: 42px; flex: none; display: flex; background: #fff; }
.doc { display: flex; gap: 30px; width: 485px; margin-left: 505px; padding-top: 8px; color: #111; }
.info { display: flex; align-items: center; width: 682px; height: 36px; margin-top: 6px; background: linear-gradient(#adadad, #888 45%, #575757); border: 1px solid #555; border-width: 1px 2px; color: #111; }
.play { width: 6px; height: 12px; margin: 0 8px 0 6px; background: #333; clip-path: polygon(0 0, 100% 50%, 0 100%); }
.keyword { width: 270px; height: 33px; margin-left: 1px; border: 2px solid #000; background: #fff; padding: 1px 0 0 3px; font-style: italic; font-weight: 500; font-size: 17px; color: #777; display: flex; }
.i-bino { margin: 0 12px 0 6px; }
.login { width: 101px; margin-left: 7px; padding-top: 2px; }
.c-login { margin-left: 27px; }
.i-cart { margin-left: 76px; }
.info .bar { width: 1px; height: 26px; margin-left: 15px; background: #aaa; }
.help { width: 24px; height: 24px; margin: 0 9px 0 14px; border: 2px solid #555e70; border-radius: 50%; background: #f4f6fa; color: #2451ad; font: bold 20px/20px "Open Sans", sans-serif; text-align: center; }
.winbtns { margin: 12px 0 0 63px; }

.tabs { height: 31px; flex: none; display: flex; background: #404040; color: #fff; }
.tab-active { width: 76px; height: 26px; margin: 5px 17px 0 67px; padding-left: 13px; border-radius: 3px 3px 0 0; background: linear-gradient(#d5d5d5, #fff); color: #333; line-height: 26px; border: 1px solid #fff; border-width: 1px 1px 0; }
.tab { display: flex; line-height: 36px; height: 31px; }
.toggle { position: relative; width: 20px; height: 11px; margin: 11px 8px 0 51px; border-radius: 3px; background: #dcdfe5; }
.toggle::after { content: ""; position: absolute; left: 6px; top: 3px; width: 8px; height: 5px; background: #333; clip-path: polygon(50% 0, 100% 100%, 0 100%); }
.caret.white { background: #fff; margin-top: 15px; }
.appmenu { position: absolute; left: 0; top: 6px; width: 57px; height: 61px; background: #999; padding: 10px 0 0 6px; }
.appbox { width: 41px; height: 41px; border: 1px solid #000; box-shadow: inset 0 0 0 1px #ddd; background: linear-gradient(#d0d0d0, #a6a6a6 45%, #777); }

.ribbon { height: 160px; flex: none; display: flex; padding-top: 2px; background: #fff; border-bottom: 1px solid #fff; }
.group { display: flex; flex-direction: column; height: 157px; }
.body { height: 128px; padding-top: 13px; display: flex; background: linear-gradient(#fff, #fcfcfc); }
.group > footer { height: 28px; border: solid #cecece; border-width: 2px 0; background: #efefef; display: flex; justify-content: center; align-items: center; gap: 9px; padding-top: 3px; }
.group > footer .more { margin-top: -3px; }
.group.low > .body { height: 129px; }
.sep { width: 2px; height: 157px; background: linear-gradient(#d0d0d0, #8a8a8a); }
.big { flex: none; display: flex; flex-direction: column; align-items: center; padding-top: 4px; }
.big > svg { margin-bottom: 6px; }
.big .caret, .select .caret { margin-top: 4px; }
.disabled { color: #b9b9b9; }
.disabled .caret { background: #777; }
.stack { display: flex; flex-direction: column; gap: 3px; }
.btn { width: 36px; height: 33px; flex: none; border: 1px solid #d0d0d0; box-shadow: inset 0 0 0 1px #e6e6e6; background: #fbfbfb; display: flex; align-items: center; padding-left: 5px; }
.btn.wide { width: 52px; gap: 8px; }
.btn.split { width: 53px; }
.btn.split b { display: flex; align-items: center; height: 31px; margin-left: 5px; padding-left: 5px; border-left: 1px solid #ccc; }

.projet { width: 148px; margin: 0 1px; }
.projet .big { width: 94px; }
.projet .stack { margin-left: -1px; }
.selection { width: 816px; margin: 0 1px 0 2px; }
.select { width: 129px; height: 107px; margin-top: -1px; border: 1px solid #0060be; background: linear-gradient(#c2dcf5, #aed1f2); display: flex; flex-direction: column; align-items: center; }
.half { width: 100%; height: 56px; margin-bottom: 2px; padding-top: 3px; border-bottom: 1px solid #0060be; display: flex; justify-content: center; }
.save { width: 99px; }
.rows { width: 348px; margin-left: -1px; padding-left: 1px; }
.row { height: 33px; display: flex; align-items: center; padding-left: 5px; }
.row span { margin: 2px 13px 0 7px; }
.same span { margin-right: 9px; }
.row .caret { margin-top: -4px; }
.row.on { width: 250px; margin-left: -1px; border: 1px solid #0060be; background: linear-gradient(#c2dcf5, #aed1f2); }
.row.on span { margin-right: 0; }
.find .row { padding-left: 6px; }
.find .row span { margin-left: 7px; margin-right: 0; }
.quick { width: 150px; height: 33px; border: 2px solid #b3b7c2; background: #fff; display: flex; align-items: center; justify-content: space-between; padding: 0 2px 0 4px; color: #777; font-style: italic; font-weight: 500; font-size: 17px; line-height: 22px; }
.quick span { margin-top: -4px; }
.line { display: flex; }
.sets { width: 98px; height: 33px; flex: none; border: 2px solid #cfcfcf; background: #fafafa; display: flex; align-items: center; padding-left: 3px; color: #000; font-size: 17px; }
.sets span { width: 34px; margin: 0 15px 0 3px; }
.line .bar { width: 1px; height: 33px; background: #ccc; margin: 0 7px 0 8px; }

.visibility { width: 137px; margin: 0 1px 0 2px; }
.visibility .big { width: 81px; }
.display { width: 87px; margin: 0 1px 0 2px; }
.display .stack { margin-left: 25px; }
.tools { width: 603px; margin: 0 1px 0 2px; }
.clash { width: 84px; }
.time { width: 82px; }
.quant { width: 122px; }
.toolgrid { flex: none; display: grid; grid-template-columns: 36px 36px; grid-auto-rows: 33px; gap: 3px 1px; height: 105px; }
.vbar { width: 2px; height: 108px; margin-left: 9px; background: #d0d0d0; }
.vbar.last { margin-left: 0; }
.data { width: 102px; }
.market { width: 133px; }
.market > svg { transform: translateX(2px); }
.empty { flex: 1; background: linear-gradient(#d3d3d3, #8e8e8e); height: 157px; }

.work { height: 810px; flex: none; display: flex; border-top: 2px solid #8b8b8b; padding: 3px 2px 0 0; }
.panel { width: 452px; height: 805px; border: solid #5b5b5f; border-width: 1px 1px 1px 0; background: #f0f0f0; color: #000; display: flex; flex-direction: column; font-size: 17px; }
h2 { height: 25px; flex: none; margin: 0; border-bottom: 1px solid #5b5b5f; padding: 0 7px 1px; background: linear-gradient(#c3dcf5, #b4d4f3); font: inherit; line-height: 22px; display: flex; align-items: center; }
.pin { margin: 0 10px 0 auto; }
.combo { width: 425px; height: 27px; flex: none; margin: 7px 0 4px 13px; border: 1px solid #adadad; background: #e1e1e1; padding: 0 6px 0 3px; display: flex; align-items: center; justify-content: space-between; }
.treewrap { width: 425px; height: 726px; margin-left: 13px; background: #fff; }
ul { width: 424px; height: 720px; margin: 0; padding: 0 0 0 9px; list-style: none; border: 1px solid #777; border-right-color: #e3e3e3; border-bottom-color: #e3e3e3; }
li { height: 21px; display: flex; align-items: center; font-weight: bold; line-height: 21px; }
.plus { margin-top: -1px; }
.file { margin: -4px 3px 0 2px; }
.view { position: relative; width: 1458px; height: 805px; margin-left: 4px; background: #000; }
.tooltip { position: absolute; left: 30px; top: 744px; width: 216px; height: 31px; padding-left: 4px; background: #585858; border: 1px solid #444; color: #fff; font-size: 21px; line-height: 34px; }
.navbar { position: absolute; left: 1424px; top: 173px; }

.status { height: 31px; flex: none; display: flex; color: #111; font-size: 17px; line-height: 35px; }
.ready { width: 31px; margin-left: 8px; }
.pager { margin: 6px 0 0 1480px; }
.count { width: 49px; margin-left: 20px; }
.pager.p2 { margin: 6px 5px 0 21px; }
.i-list { margin-top: 6px; }
.status .bar { width: 2px; height: 26px; margin: 5px 19px 0 13px; background: linear-gradient(90deg, #555 50%, #fff 50%); }
.meters { margin-top: 4px; }
.mem { margin-left: 8px; font-size: 14px; line-height: 26px; }
</style>
